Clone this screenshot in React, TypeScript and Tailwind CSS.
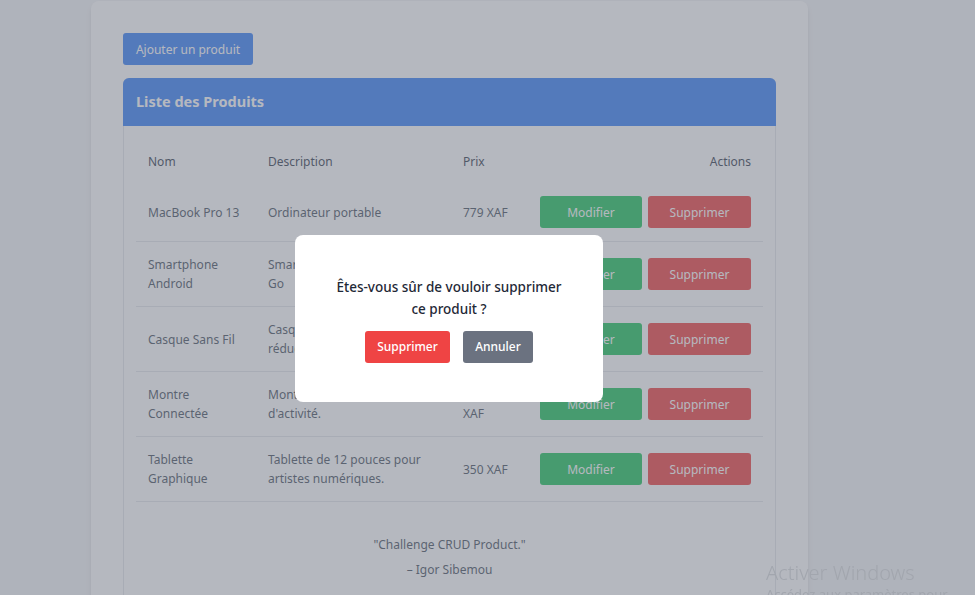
type Product = {
  name: string[]
  desc: string[]
  price: string[]
}

const products: Product[] = [
  { name: ['MacBook Pro 13'], desc: ['Ordinateur portable'], price: ['779 XAF'] },
  { name: ['Smartphone', 'Android'], desc: ['Smartphone 6,5 pouces 128', 'Go'], price: ['499 XAF'] },
  { name: ['Casque Sans Fil'], desc: ['Casque audio avec', 'réduction de bruit.'], price: ['199 XAF'] },
  { name: ['Montre', 'Connectée'], desc: ['Montre intelligente suivi', "d'activité."], price: ['1 250', 'XAF'] },
  { name: ['Tablette', 'Graphique'], desc: ['Tablette de 12 pouces pour', 'artistes numériques.'], price: ['350 XAF'] },
]

function Lines({ lines }: { lines: string[] }) {
  return (
    <>
      {lines.map((l, i) => (
        <span key={i} className="block whitespace-nowrap">
          {l}
        </span>
      ))}
    </>
  )
}

export default function App() {
  return (
    <div className="min-h-screen bg-[#f3f4f6] pt-[1px] text-[12px] leading-[19.2px]" style={{ fontFamily: '"Noto Sans", sans-serif' }}>
      <div className="ml-[91px] w-[717px] rounded-lg bg-white p-[32px] shadow-md">
        <button className="mb-[13px] h-[32px] w-[130px] rounded-[3px] bg-[#3b82f6] pt-px text-[12px] text-white">
          Ajouter un produit
        </button>

        <div className="rounded-[6px] border border-[#e5e7eb]">
          <div className="-m-px flex h-[48px] items-center rounded-t-[6px] bg-[#3b82f6] px-[13px] text-[14.5px] font-bold text-white">
            Liste des Produits
          </div>
          <div className="px-[12px] pb-[12.8px] pt-[13.8px]">
            <table className="w-full table-fixed border-collapse text-left">
              <colgroup>
                <col className="w-[120px]" />
                <col className="w-[195px]" />
                <col className="w-[76px]" />
                <col />
              </colgroup>
              <thead>
                <tr className="text-[#374151]">
                  <th className="px-[12px] py-[12.8px] font-normal">Nom</th>
                  <th className="px-[12px] py-[12.8px] font-normal">Description</th>
                  <th className="px-[12px] py-[12.8px] font-normal">Prix</th>
                  <th className="px-[12px] py-[12.8px] text-right font-normal">Actions</th>
                </tr>
              </thead>
              <tbody className="text-[#4b5563]">
                {products.map((p, i) => (
                  <tr key={i} className="border-b border-[#e5e7eb]">
                    <td className="px-[12px] py-[12.8px] align-middle">
                      <Lines lines={p.name} />
                    </td>
                    <td className="px-[12px] py-[12.8px] align-middle">
                      <Lines lines={p.desc} />
                    </td>
                    <td className="px-[12px] py-[12.8px] align-middle">
                      <Lines lines={p.price} />
                    </td>
                    <td className="px-[12px] py-[12.8px] align-middle">
                      <div className="flex justify-end gap-[6px]">
                        <button className="h-[32px] w-[102px] rounded-[3px] bg-[#22c55e] text-white">Modifier</button>
                        <button className="h-[32px] w-[103px] rounded-[3px] bg-[#ef4444] text-white">Supprimer</button>
                      </div>
                    </td>
                  </tr>
                ))}
              </tbody>
            </table>

            <div className="mt-[33px] flex flex-col items-center gap-[6px] pb-[40px] text-[#4b5563]">
              <p>"Challenge CRUD Product."</p>
              <p>– Igor Sibemou</p>
            </div>
          </div>
        </div>
      </div>

      {/* modal */}
      <div className="fixed inset-0 bg-[#6b7280]/50">
        <div className="absolute left-[295px] top-[235px] flex h-[167px] w-[308px] flex-col items-center rounded-[8px] bg-white pt-[41px]">
          <p className="text-center text-[13.5px] font-medium leading-[22.4px] text-[#1f2937]">
            Êtes-vous sûr de vouloir supprimer
            <br />
            ce produit ?
          </p>
          <div className="mt-[10px] flex gap-[13px]">
            <button className="h-[32px] w-[85px] rounded-[3px] bg-[#ef4444] font-medium text-white">Supprimer</button>
            <button className="h-[32px] w-[70px] rounded-[3px] bg-[#6b7280] font-medium text-white">Annuler</button>
          </div>
        </div>
      </div>

      <div className="pointer-events-none fixed left-[766px] top-[561px] text-[#a2a6ae]">
        <p className="text-[20px] font-light leading-[24px]">Activer Windows</p>
        <p className="text-[13px] leading-[18px]">Accédez aux paramètres pour activer Windows.</p>
      </div>
    </div>
  )
}
